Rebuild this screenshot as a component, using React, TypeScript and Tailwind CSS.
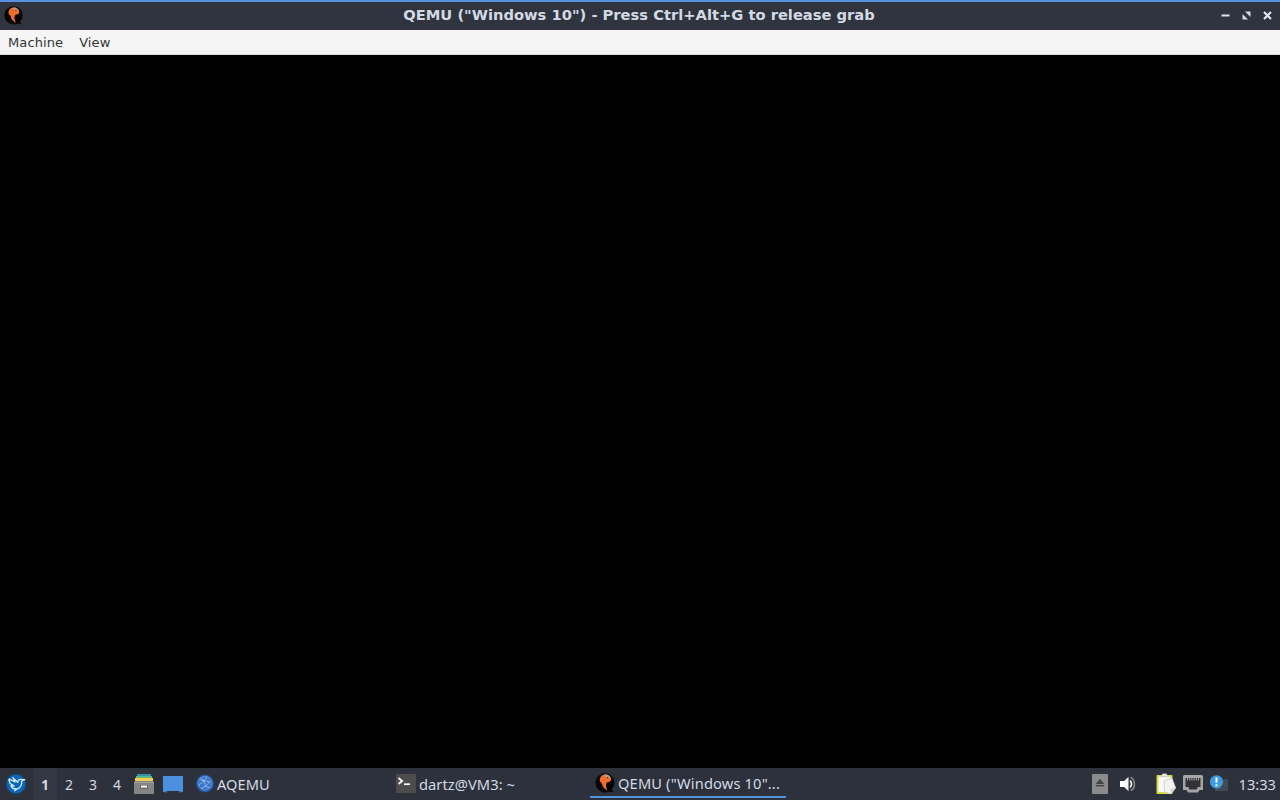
import type { ReactNode } from 'react';

function QemuIcon({ size }: { size: number }) {
  return (
    <svg width={size} height={size} viewBox="0 0 20 20" className="shrink-0">
      <circle cx="10" cy="9.800" r="9.600" fill="#050505" />
      <path d="M14 14.500 19 19.500 14.800 18.800 12 17Z" fill="#050505" />
      <path
        d="M5 8.500C4 4.500 6.800 1.500 10.300 1.500c3.500 0 6 2.500 5.700 5.200-.2 1.500-1.200 2.200-2.500 2.300-1.700.2-2.600 1.400-2.500 3.200.1 1.600.6 3.100 1.300 5.300-2.800-1.300-4.800-3.800-5.400-6.700C6.600 9.900 5.600 9.200 5 8.500Z"
        fill="#ee6e2b"
      />
      <path d="M8.800 1.700c3.700-.8 6.900 1.100 7.200 4.200-1.400-1.400-3.100-2.100-5.400-2.200Z" fill="#b99a82" />
      <circle cx="12.600" cy="4.600" r=".6" fill="#3b1a0c" />
    </svg>
  );
}

function StartIcon() {
  return (
    <svg width="20" height="20" viewBox="0 0 20 20">
      <circle cx="10" cy="10" r="9.700" fill="#0b66bb" />
      <path
        d="M2.800 4.800 9 8 6.800 3.600 11.600 8.300C12 6.200 13.300 5 15 5.400L18.800 5.700 15.800 6.800C16 10.600 14.600 13.800 11.400 14.800L8.300 17M11.400 14.800C7.800 15.200 5.600 13.600 5 11.700L8.200 12 3.800 9.200 2.800 4.800"
        fill="none"
        stroke="#d5efff"
        strokeWidth="1.300"
        strokeLinejoin="round"
      />
    </svg>
  );
}

function FilesIcon() {
  return (
    <svg width="20" height="22" viewBox="0 0 20 22">
      <path d="M3 1h14v3H3z" fill="#3a8fa5" />
      <path d="M2 3h16v3H2z" fill="#62b587" />
      <path d="M1 5h18v4H1z" fill="#f5cf55" />
      <path d="M0 9.500 1.500 8h17L20 9.500V20a1 1 0 0 1-1 1H1a1 1 0 0 1-1-1Z" fill="#858585" />
      <path d="M0 9.500h20" stroke="#a1a1a1" />
      <rect x="6" y="12" width="8" height="4" rx="1" fill="#666" />
      <rect x="7" y="12.500" width="6" height="2.200" fill="#f5f5f5" />
    </svg>
  );
}

function DesktopIcon() {
  return (
    <svg width="20" height="17" viewBox="0 0 20 17">
      <path d="M0 0h20v16h-3l-1.500-1h-11L3 16H0Z" fill="#4c91df" />
      <path d="M1 16.200h3M16 16.200h3" stroke="#2860a0" strokeWidth=".8" />
    </svg>
  );
}

function AqemuIcon() {
  return (
    <svg width="18" height="19" viewBox="0 0 18 19">
      <circle cx="9" cy="9.500" r="8.900" fill="#2459a6" />
      <circle cx="9" cy="9.200" r="6.900" fill="#3875c6" stroke="#6b9fdb" strokeWidth=".8" />
      <path
        d="M3.500 5.500 8 7l1.500 5.500 4 1M8 7l3-4M8 7l6 .5-4.500 5M3 11l5-4M5 14.500l4.500-2M5 3.500 8 7"
        fill="none"
        stroke="#a0c6ee"
        strokeWidth=".8"
      />
    </svg>
  );
}

function TerminalIcon() {
  return (
    <svg width="20" height="19" viewBox="0 0 20 19">
      <rect width="20" height="19" rx="1" fill="#4c4c4c" />
      <path d="m2.500 4 3.700 3-3.700 3" fill="none" stroke="#fff" strokeWidth="1.700" />
      <path d="M8 10.200h6" stroke="#fff" strokeWidth="1.700" />
    </svg>
  );
}

function EjectIcon() {
  return (
    <svg width="16" height="20" viewBox="0 0 16 20">
      <rect width="16" height="20" rx="1" fill="#8b8b8d" />
      <path d="m8 5 4.300 5H3.700Z" fill="#424347" />
      <path d="M3.700 11.700h8.600" stroke="#424347" strokeWidth="1.400" />
    </svg>
  );
}

function VolumeIcon() {
  return (
    <svg width="17" height="16" viewBox="0 0 17 16">
      <path d="M0 5h4l4.500-4v14L4 11H0Z" fill="#fff" />
      <path d="M10 4.700c2 1.600 2 5 0 6.600" fill="none" stroke="#f4f4f4" strokeWidth="1.700" />
      <path d="M10.500 1.500c5.300 2 5.300 11 0 13" fill="none" stroke="#85888f" strokeWidth="1.600" />
    </svg>
  );
}

function ClipboardIcon() {
  return (
    <svg width="20" height="22" viewBox="0 0 20 22">
      <rect x=".5" y="2" width="16" height="19" rx="1" fill="#d7dc46" />
      <path d="M2.500 3.500h12v15.500h-12z" fill="#fafaf6" />
      <path d="M4.500 3.700c0-2 1.800-1 2.200-3h3.600c.4 2 2.200 1 2.200 3Z" fill="#ecece7" stroke="#aaa" strokeWidth=".5" />
      <path d="m8 8 8-3 3.800 10-4.800 6-6.500-2Z" fill="#f3f3ef" stroke="#bdbdb8" strokeWidth=".6" />
      <path d="m15 21-.5-5 5.300-1Z" fill="#d3d3ce" />
    </svg>
  );
}

function NetworkIcon() {
  return (
    <svg width="20" height="18" viewBox="0 0 20 18">
      <path d="M1.500 0h17A1.500 1.500 0 0 1 20 1.500V15h-3.500L15 17.500H5L3.500 15H0V1.500A1.500 1.500 0 0 1 1.500 0Z" fill="#a5a5a5" />
      <path d="M2.500 3h15v9h-2.800l-1 2.500H6.300l-1-2.500H2.500Z" fill="#303236" />
      <path d="M4.500 3v2.500m2.200-2.500v2.500m2.200-2.500v2.500m2.200-2.500v2.500m2.200-2.500v2.500m2.200-2.500v2.500" stroke="#b5b5b5" strokeWidth=".9" />
    </svg>
  );
}

function NotifyIcon() {
  return (
    <svg width="20" height="18" viewBox="0 0 20 18">
      <path d="M5 4h13v12H5z" fill="#414a52" />
      <circle cx="6.500" cy="6.800" r="6.600" fill="#3e9bdf" />
      <path d="M6.500 2.500v5.300M6.500 9.300v2" stroke="#fff" strokeWidth="2" />
    </svg>
  );
}

function Task({ icon, label, active = false }: { icon: ReactNode; label: ReactNode; active?: boolean }) {
  return (
    <div className={`flex h-[30px] shrink-0 items-center gap-[3px] border-b-2 pt-0.5 pl-[5px] ${active ? 'w-[196px] border-[#5294e2]' : 'w-[199px] border-transparent'}`}>
      {icon}
      {label}
    </div>
  );
}

function TitleBar() {
  return (
    <header className="flex h-[30px] items-center border-t-2 border-[#5a91de] bg-[#2f343f]">
      <div className="flex w-20 pb-0.5 pl-1">
        <QemuIcon size={19} />
      </div>
      <h1 className="flex-1 pr-0.5 pb-0.5 text-center font-['DejaVu_Sans',sans-serif] text-[14.700px] font-bold whitespace-nowrap text-[#d3dae3]">
        QEMU ("Windows 10") - Press Ctrl+Alt+G to release grab
      </h1>
      <div className="flex w-20 items-center justify-end gap-3 pr-2 pb-0.5">
        <svg width="9" height="9" viewBox="0 0 9 9">
          <path d="M.5 4.500h8" stroke="#e1e6ee" strokeWidth="2" />
        </svg>
        <svg width="9" height="9" viewBox="0 0 9 9">
          <path d="M3 .5h5.500V6ZM.5 3v5.500H6Z" fill="#d3dae3" />
        </svg>
        <svg width="9" height="9" viewBox="0 0 9 9">
          <path d="m1 1 7 7M8 1 1 8" stroke="#e1e6ee" strokeWidth="2.200" />
        </svg>
      </div>
    </header>
  );
}

function Taskbar() {
  return (
    <footer className="flex h-8 items-center bg-[#2d313c] font-['Noto_Sans',sans-serif] text-[14px] whitespace-nowrap text-[#d3dae3]">
      <div className="flex w-[33px] pl-1.5">
        <StartIcon />
      </div>
      <div className="flex h-full w-24 text-center leading-[33px]">
        <span className="w-6 bg-[#343842] font-bold">1</span>
        <span className="w-6">2</span>
        <span className="w-6">3</span>
        <span className="w-6">4</span>
      </div>
      <div className="flex w-[61px] items-center gap-[9px] pl-[5px]">
        <FilesIcon />
        <DesktopIcon />
      </div>
      <div className="flex h-full flex-1 items-start text-[14.670px]">
        <Task
          icon={
            <div className="pl-px">
              <AqemuIcon />
            </div>
          }
          label={<span className="pt-px">AQEMU</span>}
        />
        <div className="w-0.5" />
        <Task icon={<TerminalIcon />} label={<span className="pt-px tracking-[0.060px]">dartz@VM3: ~</span>} />
        <Task active icon={<QemuIcon size={20} />} label={<span className="tracking-[0.140px]">QEMU ("Windows 10"...</span>} />
      </div>
      <div className="flex shrink-0 items-center pr-1">
        <EjectIcon />
        <div className="ml-3 flex">
          <VolumeIcon />
        </div>
        <div className="ml-[19px] flex items-center gap-[7px]">
          <ClipboardIcon />
          <NetworkIcon />
          <NotifyIcon />
        </div>
        <span className="ml-[9px] text-[14.670px]">13:33</span>
      </div>
    </footer>
  );
}

export default function App() {
  return (
    <div className="flex h-screen w-full flex-col overflow-hidden bg-black">
      <TitleBar />
      <nav className="flex h-[25px] items-center gap-4 border-b border-[#dddcdb] bg-[#f6f5f5] px-2 pt-0.5 font-['DejaVu_Sans',sans-serif] text-[13px] tracking-[0.100px] text-[#303638]">
        <span>Machine</span>
        <span>View</span>
      </nav>
      <main className="flex-1 bg-black" />
      <Taskbar />
    </div>
  );
}
